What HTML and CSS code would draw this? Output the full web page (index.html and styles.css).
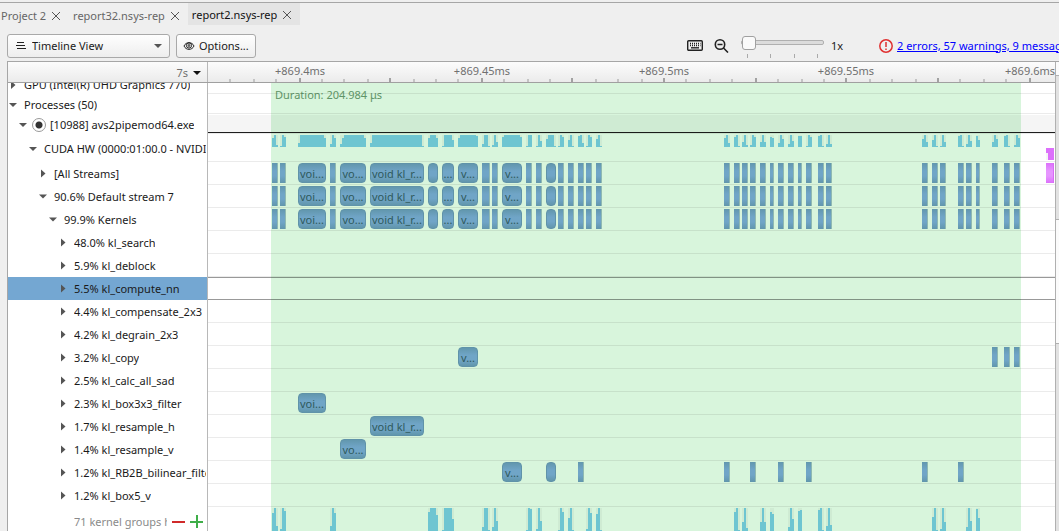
FILE: index.html
```html
<!DOCTYPE html>
<html lang="en">

<head>
    <meta charset="UTF-8">
    <meta name="viewport" content="width=device-width, initial-scale=1.0">
    <title>report2.nsys-rep</title>
    <link rel="stylesheet" href="styles.css">
</head>

<body>
    <nav class="tabs">
        <div class="tab"><button class="tabName">Project 2</button><button class="tabClose" aria-label="Close Project 2"><svg viewBox="0 0 10 10"><path d="M1 1l8 8M9 1l-8 8"/></svg></button></div>
        <div class="tab"><button class="tabName">report32.nsys-rep</button><button class="tabClose" aria-label="Close report32"><svg viewBox="0 0 10 10"><path d="M1 1l8 8M9 1l-8 8"/></svg></button></div>
        <div class="tab active"><button class="tabName">report2.nsys-rep</button><button class="tabClose" aria-label="Close report2"><svg viewBox="0 0 10 10"><path d="M1 1l8 8M9 1l-8 8"/></svg></button></div>
    </nav>

    <div class="toolbar">
        <div class="viewSelect">
            <svg class="listIcon" viewBox="0 0 10 9"><path d="M1 1.5h7M0 4.500h9M1 7.500h9"/></svg>
            <select id="view" aria-label="View">
                <option>Timeline View</option>
                <option>Analysis Summary</option>
            </select>
            <svg class="caret" viewBox="0 0 8 4"><path d="M0 0h8l-4 4z"/></svg>
        </div>
        <button class="options">
            <svg viewBox="0 0 12 10"><path d="M1 5C3 .5 9 .5 11 5 9 9.500 3 9.500 1 5z"/><circle cx="6" cy="4.500" r="2.600"/><circle cx="6" cy="4.500" r=".9"/></svg>
            Options...
        </button>
        <div class="tools">
            <svg class="keyboard" viewBox="0 0 16 11"><rect x=".7" y=".7" width="14.600" height="9.600" rx="1"/><path d="M3 3.500h10.500M3 5.500h10.500" stroke-dasharray="1 1"/><path d="M4 7.800h8"/></svg>
            <svg class="magnifier" viewBox="0 0 15 14"><circle cx="6" cy="5.500" r="4.700"/><path d="M3.500 5.500h5M9.500 9l4.500 4.500"/></svg>
            <div class="zoom">
                <input id="zoom" type="range" min="0" max="3" value="0" step="1">
                <div class="zoomTicks"><i></i><i></i><i></i><i></i></div>
            </div>
            <label for="zoom">1x</label>
        </div>
        <div class="messages">
            <svg viewBox="0 0 14 14"><circle cx="7" cy="7" r="6.200"/><path d="M7 3v5M7 9.500v1.500"/></svg>
            <a href="#messages">2 errors, 57 warnings, 9 messages</a>
        </div>
    </div>

    <main class="panel">
        <div class="timeline">
            <div class="head">
                <button class="unit">7s <svg viewBox="0 0 8 4"><path d="M0 0h8l-4 4z"/></svg></button>
                <div id="ruler" class="ruler"></div>
            </div>
            <div class="body">
                <div class="range"><span>Duration: 204.984 μs</span></div>
                <div id="rows" class="rows"></div>
            </div>
        </div>
        <div class="scroll">
            <div class="scrollUp"></div>
            <div class="scrollThumb"></div>
        </div>
    </main>

    <script>
        //every event is [start, width, text], positions are measured from the left of the lane
        var events = [
            [64, 6], [72, 6], [90, 28, "voi..."], [122, 6], [132, 26, "vo..."], [162, 54, "void kl_r..."],
            [220, 10], [234, 12, "..."], [250, 20, "v..."], [274, 8], [284, 6], [294, 20, "v..."], [318, 6],
            [328, 6], [338, 10], [350, 6], [360, 6], [370, 6], [378, 6], [388, 6],
            [516, 6], [526, 6], [534, 6], [542, 6], [552, 6], [562, 4], [570, 6], [580, 6], [590, 4],
            [598, 6], [610, 6], [618, 6],
            [714, 6], [724, 6], [732, 6], [750, 6], [758, 6], [768, 4], [784, 6], [796, 6], [806, 6]
        ];
        //pick events by start
        function pick(starts) {
            return events.filter(function (e) {
                return starts.indexOf(e[0]) >= 0;
            });
        }
        //load graphs: [start, heights of the 2px columns]
        var load = [
            [64, [9, 12, 2]], [72, [1, 12, 10]],
            [90, [4, 12, 12, 12, 12, 12, 12, 12, 12, 12, 12, 12, 12, 9]],
            [122, [3, 12, 9]], [132, [3, 9, 12, 12, 12, 12, 12, 12, 12, 12, 12, 12, 9]],
            [162, [4, 12, 12, 12, 12, 12, 12, 12, 12, 12, 12, 12, 12, 12, 12, 12, 12, 12, 12, 12, 12, 12, 12, 12, 12, 12, 1]],
            [220, [9, 12, 12, 12, 9]], [234, [1, 12, 12, 12, 12, 7]],
            [250, [9, 12, 12, 12, 12, 12, 12, 12, 12, 11]], [274, [3, 12, 12, 1]], [284, [2, 12, 5]],
            [294, [10, 12, 12, 12, 12, 12, 12, 12, 12, 10]], [318, [1, 12, 12]], [328, [1, 12, 6]],
            [338, [8, 12, 12, 12, 1]], [350, [1, 12, 10]], [360, [7, 12, 1]], [370, [11, 12, 4]],
            [378, [1, 12, 10]], [388, [8, 12, 1]],
            [516, [9, 12, 4]], [526, [10, 12, 1]], [534, [5, 12, 2]], [542, [2, 12, 10]], [552, [5, 12, 5]],
            [562, [10, 9]], [570, [4, 12, 8]], [580, [3, 12, 6]], [590, [11, 11]], [598, [1, 12, 10]],
            [610, [11, 12, 1]], [618, [3, 12, 3]],
            [714, [8, 12, 5]], [724, [7, 12, 1]], [732, [1, 12, 5]], [750, [11, 12, 1]], [758, [3, 12, 6]],
            [768, [11, 7]], [784, [5, 12, 8]], [796, [11, 12, 1]], [806, [2, 12, 9]]
        ];
        var hiddenLoad = [
            [64, [18, 23, 5]], [72, [2, 23, 20]], [122, [5, 23, 18]], [220, [19, 23, 23, 23, 16]],
            [234, [1, 23, 23, 23, 23, 12]], [274, [4, 23, 23, 1]], [284, [4, 23, 10]], [318, [1, 23, 22]],
            [328, [2, 23, 10]], [350, [1, 23, 19]], [360, [13, 23, 1]], [378, [2, 23, 18]], [388, [17, 23, 1]],
            [526, [19, 23, 1]], [534, [9, 23, 3]], [552, [9, 23, 9]], [562, [19, 17]], [580, [4, 23, 12]],
            [590, [20, 21]], [610, [21, 23, 1]], [618, [5, 23, 6]],
            [724, [14, 23, 1]], [732, [2, 23, 9]], [758, [4, 23, 10]], [768, [22, 13]]
        ];
        var rows = [
            { level: 0, text: "GPU (Intel(R) UHD Graphics 770)", cls: "short cut" },
            { level: 0, text: "Processes (50)", open: true, cls: "short" },
            { level: 1, text: "[10988] avs2pipemod64.exe", open: true, cls: "short process", radio: true },
            { level: 2, text: "CUDA HW (0000:01:00.0 - NVIDIA)", open: true, cls: "tall", load: load, memLoad: [[838, [5, 12, 12, 12]]] },
            { level: 3, text: "[All Streams]", events: events, mem: [[838, 8]] },
            { level: 3, text: "90.6% Default stream 7", open: true, events: events },
            { level: 4, text: "99.9% Kernels", open: true, events: events },
            { level: 5, text: "48.0% kl_search" },
            { level: 5, text: "5.9% kl_deblock" },
            { level: 5, text: "5.5% kl_compute_nn", cls: "selected" },
            { level: 5, text: "4.4% kl_compensate_2x3" },
            { level: 5, text: "4.2% kl_degrain_2x3" },
            { level: 5, text: "3.2% kl_copy", events: pick([250, 784, 796, 806]) },
            { level: 5, text: "2.5% kl_calc_all_sad" },
            { level: 5, text: "2.3% kl_box3x3_filter", events: pick([90]) },
            { level: 5, text: "1.7% kl_resample_h", events: pick([162]) },
            { level: 5, text: "1.4% kl_resample_v", events: pick([132]) },
            { level: 5, text: "1.2% kl_RB2B_bilinear_filter", events: pick([294, 338, 370, 516, 542, 570, 598, 714, 750]) },
            { level: 5, text: "1.2% kl_box5_v" },
            { level: 5, text: "71 kernel groups hidden", cls: "more", load: hiddenLoad }
        ];

        function add(parent, tag, cls, text) {
            var el = document.createElement(tag);
            el.className = cls;
            if (text) {
                el.textContent = text;
            }
            parent.appendChild(el);
            return el;
        }
        function drawEvents(lane, list, cls) {
            list.forEach(function (e) {
                //wide events get round corners
                var bar = add(lane, "div", "event " + (e[1] > 8 ? "wide " : "") + cls, e[2]);
                bar.style.left = e[0] + "px";
                bar.style.width = e[1] + "px";
            });
        }
        function drawLoad(lane, list, cls) {
            list.forEach(function (g) {
                var graph = add(lane, "div", "load " + cls);
                graph.style.left = g[0] + "px";
                g[1].forEach(function (h) {
                    add(graph, "i", "").style.height = h + "px";
                });
            });
        }

        var box = document.getElementById("rows");
        rows.forEach(function (r) {
            var row = add(box, "div", "row " + (r.cls || ""));
            var label = add(row, "div", "label level" + r.level);
            if (r.cls !== "more") {
                var arrow = add(label, "button", "arrow" + (r.open ? " open" : ""));
                arrow.setAttribute("aria-label", "Toggle " + r.text);
            }
            if (r.radio) {
                var radio = add(label, "input", "pin");
                radio.type = "radio";
                radio.checked = true;
                radio.setAttribute("aria-label", r.text);
            }
            add(label, "span", "name", r.text);
            if (r.cls === "more") {
                add(label, "button", "less").setAttribute("aria-label", "Show less");
                add(label, "button", "plus").setAttribute("aria-label", "Show more");
            }
            var lane = add(row, "div", "lane");
            drawEvents(lane, r.events || [], "");
            drawEvents(lane, r.mem || [], "memory");
            drawLoad(lane, r.load || [], "");
            drawLoad(lane, r.memLoad || [], "memory");
        });

        //ruler, every 4th tick is long and every 8th has a label
        var ruler = document.getElementById("ruler");
        var names = ["+869.4ms", "+869.45ms", "+869.5ms", "+869.55ms", "+869.6ms"];
        for (var k = -3; k <= 32; k++) {
            var x = Math.floor((92 + k * 22.82) / 2) * 2;
            add(ruler, "i", k % 4 === 0 ? "tick long" : "tick").style.left = x - 1 + "px";
            if (k >= 0 && k % 8 === 0) {
                add(ruler, "span", "time", names[k / 8]).style.left = x + "px";
            }
        }
    </script>
</body>

</html>
```
FILE: styles.css
```css
* {
    box-sizing: border-box;
}

body {
    margin: 0;
    height: 100vh;
    display: flex;
    flex-direction: column;
    overflow: hidden;
    background: #efefef;
    color: #1a1a1a;
    font: 11px/16px "Noto Sans", "Open Sans", sans-serif;
}

button,
select,
input {
    margin: 0;
    padding: 0;
    border: 0;
    background: none;
    color: inherit;
    font: inherit;
}

svg {
    flex: none;
    fill: none;
    stroke: #222;
}

/* tabs */
.tabs {
    display: flex;
    flex: none;
    height: 25px;
    margin-top: 2px;
    border-top: 1px solid #a6a6a6;
}

.tab {
    display: flex;
    align-items: center;
    gap: 5px;
    height: 22px;
    padding: 3px 8px 0 4px;
    color: #666;
}

.tab:first-child {
    padding-left: 1px;
}

.tab.active {
    background: #e4e4e4;
    color: #111;
    padding-top: 1px;
}

.tabName {
    white-space: nowrap;
}

.tabClose {
    display: flex;
}

.tabClose svg {
    width: 10px;
    height: 10px;
    stroke: #555;
}

/* toolbar */
.toolbar {
    display: flex;
    align-items: center;
    flex: none;
    height: 34px;
    padding: 3px 0 0 7px;
}

.viewSelect,
.options {
    display: flex;
    align-items: center;
    flex: none;
    height: 24px;
    border: 1px solid #a9a9a9;
    border-radius: 3px;
    background: linear-gradient(#fefefe, #eeeeee);
}

.viewSelect {
    width: 163px;
    padding: 0 7px 0 8px;
    gap: 6px;
}

.viewSelect select {
    flex: 1;
    appearance: none;
}

.listIcon {
    width: 10px;
    height: 9px;
}

.caret {
    width: 8px;
    height: 4px;
    fill: #555;
    stroke: none;
}

.options {
    margin-left: 6px;
    padding: 0 6px;
    gap: 4px;
}

.options svg {
    width: 12px;
    height: 10px;
}

.tools {
    display: flex;
    align-items: center;
    flex: none;
    margin-left: auto;
}

.keyboard {
    width: 16px;
    height: 11px;
    stroke-width: 1.4;
}

.magnifier {
    width: 15px;
    height: 14px;
    margin-left: 11px;
    stroke-width: 1.6;
}

.zoom {
    width: 83px;
    margin: 0 7px 0 12px;
    padding-top: 2px;
}

.zoom input {
    display: block;
    width: 100%;
    height: 14px;
    appearance: none;
}

.zoom input::-webkit-slider-runnable-track {
    height: 5px;
    border: 1px solid #b0b0b0;
    border-radius: 2px;
    background: #dcdcdc;
}

.zoom input::-webkit-slider-thumb {
    appearance: none;
    width: 14px;
    height: 14px;
    margin-top: -5px;
    border: 1px solid #a0a0a0;
    border-radius: 3px;
    background: #fafafa;
}

.zoomTicks {
    display: flex;
    justify-content: space-between;
    padding: 4px 6px 0;
}

.zoomTicks i {
    width: 1px;
    height: 4px;
    background: #aaa;
}

.messages {
    display: flex;
    align-items: center;
    flex: none;
    gap: 4px;
    width: 180px;
    margin-left: 36px;
    overflow: hidden;
    white-space: nowrap;
}

.messages svg {
    width: 14px;
    height: 14px;
    stroke: #e03030;
    stroke-width: 1.5;
}

.messages a {
    color: #0000ff;
}

/* timeline */
.panel {
    display: flex;
    flex: 1;
    min-height: 0;
    margin-left: 7px;
    border-top: 1px solid #a6a6a6;
    border-left: 1px solid #a6a6a6;
    background: #fff;
}

.timeline {
    display: flex;
    flex-direction: column;
    flex: 1;
    min-width: 0;
}

.head {
    display: flex;
    flex: none;
    height: 21px;
    border-bottom: 1px solid #a0a0a0;
    background: linear-gradient(#fcfcfc, #ebebeb);
    color: #707070;
}

.unit {
    display: flex;
    align-items: center;
    justify-content: flex-end;
    gap: 5px;
    width: 200px;
    padding: 2px 6px 0 0;
    border-right: 1px solid #b8b8b8;
}

.unit svg {
    width: 8px;
    height: 4px;
    fill: #111;
    stroke: none;
}

.ruler {
    position: relative;
    flex: 1;
    overflow: hidden;
}

.tick {
    position: absolute;
    bottom: 0;
    width: 2px;
    height: 3px;
    background: #c4c4c4;
}

.tick.long {
    height: 4px;
    background: #a2a2a2;
}

.time {
    position: absolute;
    top: 1px;
    transform: translateX(-50%);
}

.body {
    position: relative;
    flex: 1;
    min-height: 0;
    overflow: hidden;
}

/* selected time range, under the rows */
.range {
    position: absolute;
    top: 0;
    bottom: 0;
    left: 263px;
    width: 750px;
    padding: 4px;
    background: #d8f5dc;
    color: #5f9467;
}

.rows {
    position: relative;
}

.row {
    display: flex;
    height: 23px;
}

.row.short {
    height: 20px;
}

.row.cut {
    margin-top: -9px;
}

.row.tall {
    height: 28px;
}

.row.more {
    height: 29px;
}

.label {
    display: flex;
    align-items: center;
    flex: none;
    width: 200px;
    padding-right: 1px;
    border-right: 1px solid #b8b8b8;
    background: #fff;
    overflow: hidden;
    white-space: nowrap;
}

.short .label,
.tall .label {
    padding-top: 2px;
}

.level1 {
    padding-left: 10px;
}

.level2 {
    padding-left: 20px;
}

.level3 {
    padding-left: 30px;
}

.level4 {
    padding-left: 40px;
}

.level5 {
    padding-left: 50px;
}

.name {
    overflow: hidden;
}

.arrow {
    flex: none;
    width: 10px;
    height: 10px;
    margin-right: 6px;
    background: #555;
    clip-path: polygon(30% 10%, 75% 50%, 30% 90%);
}

.arrow.open {
    clip-path: polygon(10% 30%, 90% 30%, 50% 70%);
}

.pin {
    flex: none;
    width: 14px;
    height: 14px;
    margin: 0 4px 0 -2px;
    appearance: none;
    border: 1px solid #999;
    border-radius: 50%;
    background: radial-gradient(circle, #333 3px, #fff 4px);
}

.selected .label {
    background: #74a7d2;
}

.lane {
    position: relative;
    flex: 1;
    border-bottom: 1px solid rgba(0, 0, 0, 0.08);
    overflow: hidden;
}

.process .lane::before {
    content: "";
    display: block;
    height: 17px;
    margin-top: 1px;
    border-bottom: 1px solid rgba(0, 0, 0, 0.88);
    background: rgba(0, 0, 0, 0.04);
}

.selected .lane {
    border-top: 1px solid rgba(0, 0, 0, 0.4);
    border-bottom-color: rgba(0, 0, 0, 0.4);
}

.more .label {
    padding-left: 66px;
    padding-right: 4px;
    color: #8a8a8a;
}

.more .name {
    flex: 1;
}

.less,
.plus {
    flex: none;
    width: 13px;
    height: 13px;
    margin-left: 5px;
    background: linear-gradient(#d02a2a, #d02a2a) center / 13px 1px no-repeat;
}

.less {
    background-size: 13px 2px;
}

.plus {
    background: linear-gradient(#3fae49, #3fae49) center / 13px 2px no-repeat, linear-gradient(#3fae49, #3fae49) center / 2px 13px no-repeat;
}

.event {
    position: absolute;
    top: 1px;
    height: 20px;
    border-right: 1px solid #8fb9b2;
    background: linear-gradient(#6297ae, #70a5c7 40%, #70a5c7 65%, #6196ac);
    color: #2f5a5c;
    line-height: 20px;
    text-align: center;
    white-space: nowrap;
    overflow: hidden;
}

.event.wide {
    border: 1px solid #6093a9;
    border-radius: 4px;
    line-height: 19px;
}

.event.memory {
    border-color: #d96cf5;
    background: linear-gradient(#dc70fb, #e695ff 40%, #e695ff 65%, #dc70fb);
}

.load {
    position: absolute;
    top: 1px;
    display: flex;
    align-items: flex-end;
    height: 12px;
    background: rgba(0, 0, 0, 0.04);
}

.load i {
    width: 2px;
    background: #6ec5d1;
}

.load.memory {
    top: 14px;
    align-items: flex-start;
}

.load.memory i {
    background: #dc70fb;
}

.more .load {
    height: 23px;
}

/* scrollbar */
.scroll {
    display: flex;
    flex-direction: column;
    width: 4px;
    border-left: 1px solid #b0b0b0;
    background: #e2e2e2;
}

.scrollUp {
    height: 14px;
    border-bottom: 1px solid #b0b0b0;
    background: #fbfbfb;
}

.scrollThumb {
    height: 125px;
    margin-top: 143px;
    border: solid #b0b0b0;
    border-width: 1px 0;
    background: #fbfbfb;
}
```
